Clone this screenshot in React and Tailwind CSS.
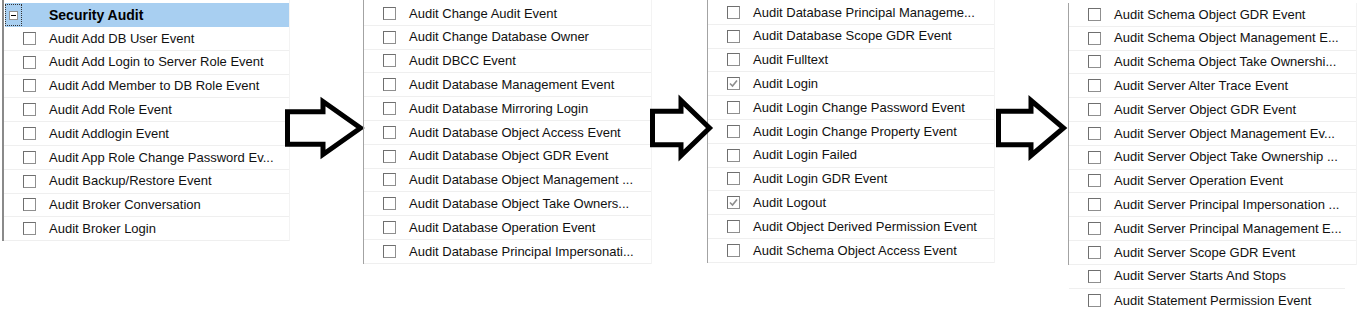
import React from "react";

const font = { fontFamily: '"Liberation Sans", Arial, sans-serif' };

const Box = ({ checked }) => (
    <span className="relative w-[13px] h-[13px] shrink-0 border border-[#8f8f8f] border-t-[#6f6f6f] border-l-[#6f6f6f] bg-white">
        {checked && (
            <svg className="absolute left-0 top-0" width="11" height="11" viewBox="0 0 11 11">
                <path d="M2 5.5 L4.5 8 L9 2.5" fill="none" stroke="#8d8d8d" strokeWidth="1.6" />
            </svg>
        )}
    </span>
);

const Row = ({ label, checked, line = true }) => (
    <div className={"h-[23.8px] flex items-center gap-[13px] pl-[19px] text-[13px] text-[#111] whitespace-nowrap " + (line ? "border-b border-[#efefef]" : "")}>
        <Box checked={checked} />
        <span>{label}</span>
    </div>
);

const Arrow = ({ w, h }) => {
    const sw = 5;
    const i = sw / 2;
    const headX = Math.round(w * 0.48);
    const mid = h / 2;
    const shaft = h * 0.27;
    const pts = [
        [i, mid - shaft],
        [headX, mid - shaft],
        [headX, i + 1],
        [w - i - 2, mid],
        [headX, h - i - 1],
        [headX, mid + shaft],
        [i, mid + shaft],
    ].map((p) => p.join(",")).join(" ");
    return (
        <svg width={w} height={h} viewBox={`0 0 ${w} ${h}`} className="overflow-visible">
            <polygon points={pts} fill="white" stroke="black" strokeWidth={sw} strokeLinejoin="miter" />
        </svg>
    );
};

const p1 = [
    "Audit Add DB User Event",
    "Audit Add Login to Server Role Event",
    "Audit Add Member to DB Role Event",
    "Audit Add Role Event",
    "Audit Addlogin Event",
    "Audit App Role Change Password Ev...",
    "Audit Backup/Restore Event",
    "Audit Broker Conversation",
    "Audit Broker Login",
];

const p2 = [
    "Audit Change Audit Event",
    "Audit Change Database Owner",
    "Audit DBCC Event",
    "Audit Database Management Event",
    "Audit Database Mirroring Login",
    "Audit Database Object Access Event",
    "Audit Database Object GDR Event",
    "Audit Database Object Management ...",
    "Audit Database Object Take Owners...",
    "Audit Database Operation Event",
    "Audit Database Principal Impersonati...",
];

const p3 = [
    ["Audit Database Principal Manageme...", false],
    ["Audit Database Scope GDR Event", false],
    ["Audit Fulltext", false],
    ["Audit Login", true],
    ["Audit Login Change Password Event", false],
    ["Audit Login Change Property Event", false],
    ["Audit Login Failed", false],
    ["Audit Login GDR Event", false],
    ["Audit Logout", true],
    ["Audit Object Derived Permission Event", false],
    ["Audit Schema Object Access Event", false],
];

const p4 = [
    "Audit Schema Object GDR Event",
    "Audit Schema Object Management E...",
    "Audit Schema Object Take Ownershi...",
    "Audit Server Alter Trace Event",
    "Audit Server Object GDR Event",
    "Audit Server Object Management Ev...",
    "Audit Server Object Take Ownership ...",
    "Audit Server Operation Event",
    "Audit Server Principal Impersonation ...",
    "Audit Server Principal Management E...",
    "Audit Server Scope GDR Event",
];

const App = () => {
    return (
        <div className="w-[1372px] h-[315px] bg-white flex items-start overflow-hidden" style={font}>
            {/* panel 1 */}
            <div className="ml-[2px] w-[288px] border-l-2 border-[#8a8a8a] border-r border-r-[#f3f3f3] pt-[3px]">
                <div className="h-[24px] ml-[1px] bg-[#a8cff1] flex items-center relative">
                    <div className="w-[17px] h-[22px] border border-dotted border-[#333] flex items-center justify-center">
                        <span className="w-[9px] h-[9px] bg-white border border-[#919191] flex items-center justify-center">
                            <span className="w-[5px] h-[1px] bg-black"></span>
                        </span>
                    </div>
                    <span className="ml-[27px] text-[14px] font-bold text-black">Security Audit</span>
                </div>
                {p1.map((t) => (
                    <Row key={t} label={t} />
                ))}
            </div>

            <div className="w-[73px] shrink-0 mt-[98px] -ml-[5px] mr-[5px]">
                <Arrow w={80} h={60} />
            </div>

            {/* panel 2 */}
            <div className="w-[289px] border-l border-[#a3a3a3] border-r border-r-[#f3f3f3] pt-[2px]">
                {p2.map((t) => (
                    <Row key={t} label={t} />
                ))}
            </div>

            <div className="w-[55px] shrink-0 mt-[97px] -ml-[2px] mr-[2px] relative z-10">
                <Arrow w={64} h={62} />
            </div>

            {/* panel 3 */}
            <div className="w-[288px] border-l border-[#a3a3a3] border-r border-r-[#f3f3f3] pt-[1px]">
                {p3.map(([t, c]) => (
                    <Row key={t} label={t} checked={c} />
                ))}
            </div>

            <div className="w-[73px] shrink-0 mt-[97px] ml-[1px] -mr-[1px] relative z-10">
                <Arrow w={72} h={62} />
            </div>

            {/* panel 4 */}
            <div className="w-[289px] pt-[3px]">
                <div className="border-l border-[#a3a3a3] border-r border-r-[#f3f3f3]">
                    {p4.map((t) => (
                        <Row key={t} label={t} />
                    ))}
                </div>
                <div className="ml-[1px] w-[276px]">
                    <Row label="Audit Server Starts And Stops" />
                    <Row label="Audit Statement Permission Event" line={false} />
                </div>
            </div>
        </div>
    );
};

export default App;
